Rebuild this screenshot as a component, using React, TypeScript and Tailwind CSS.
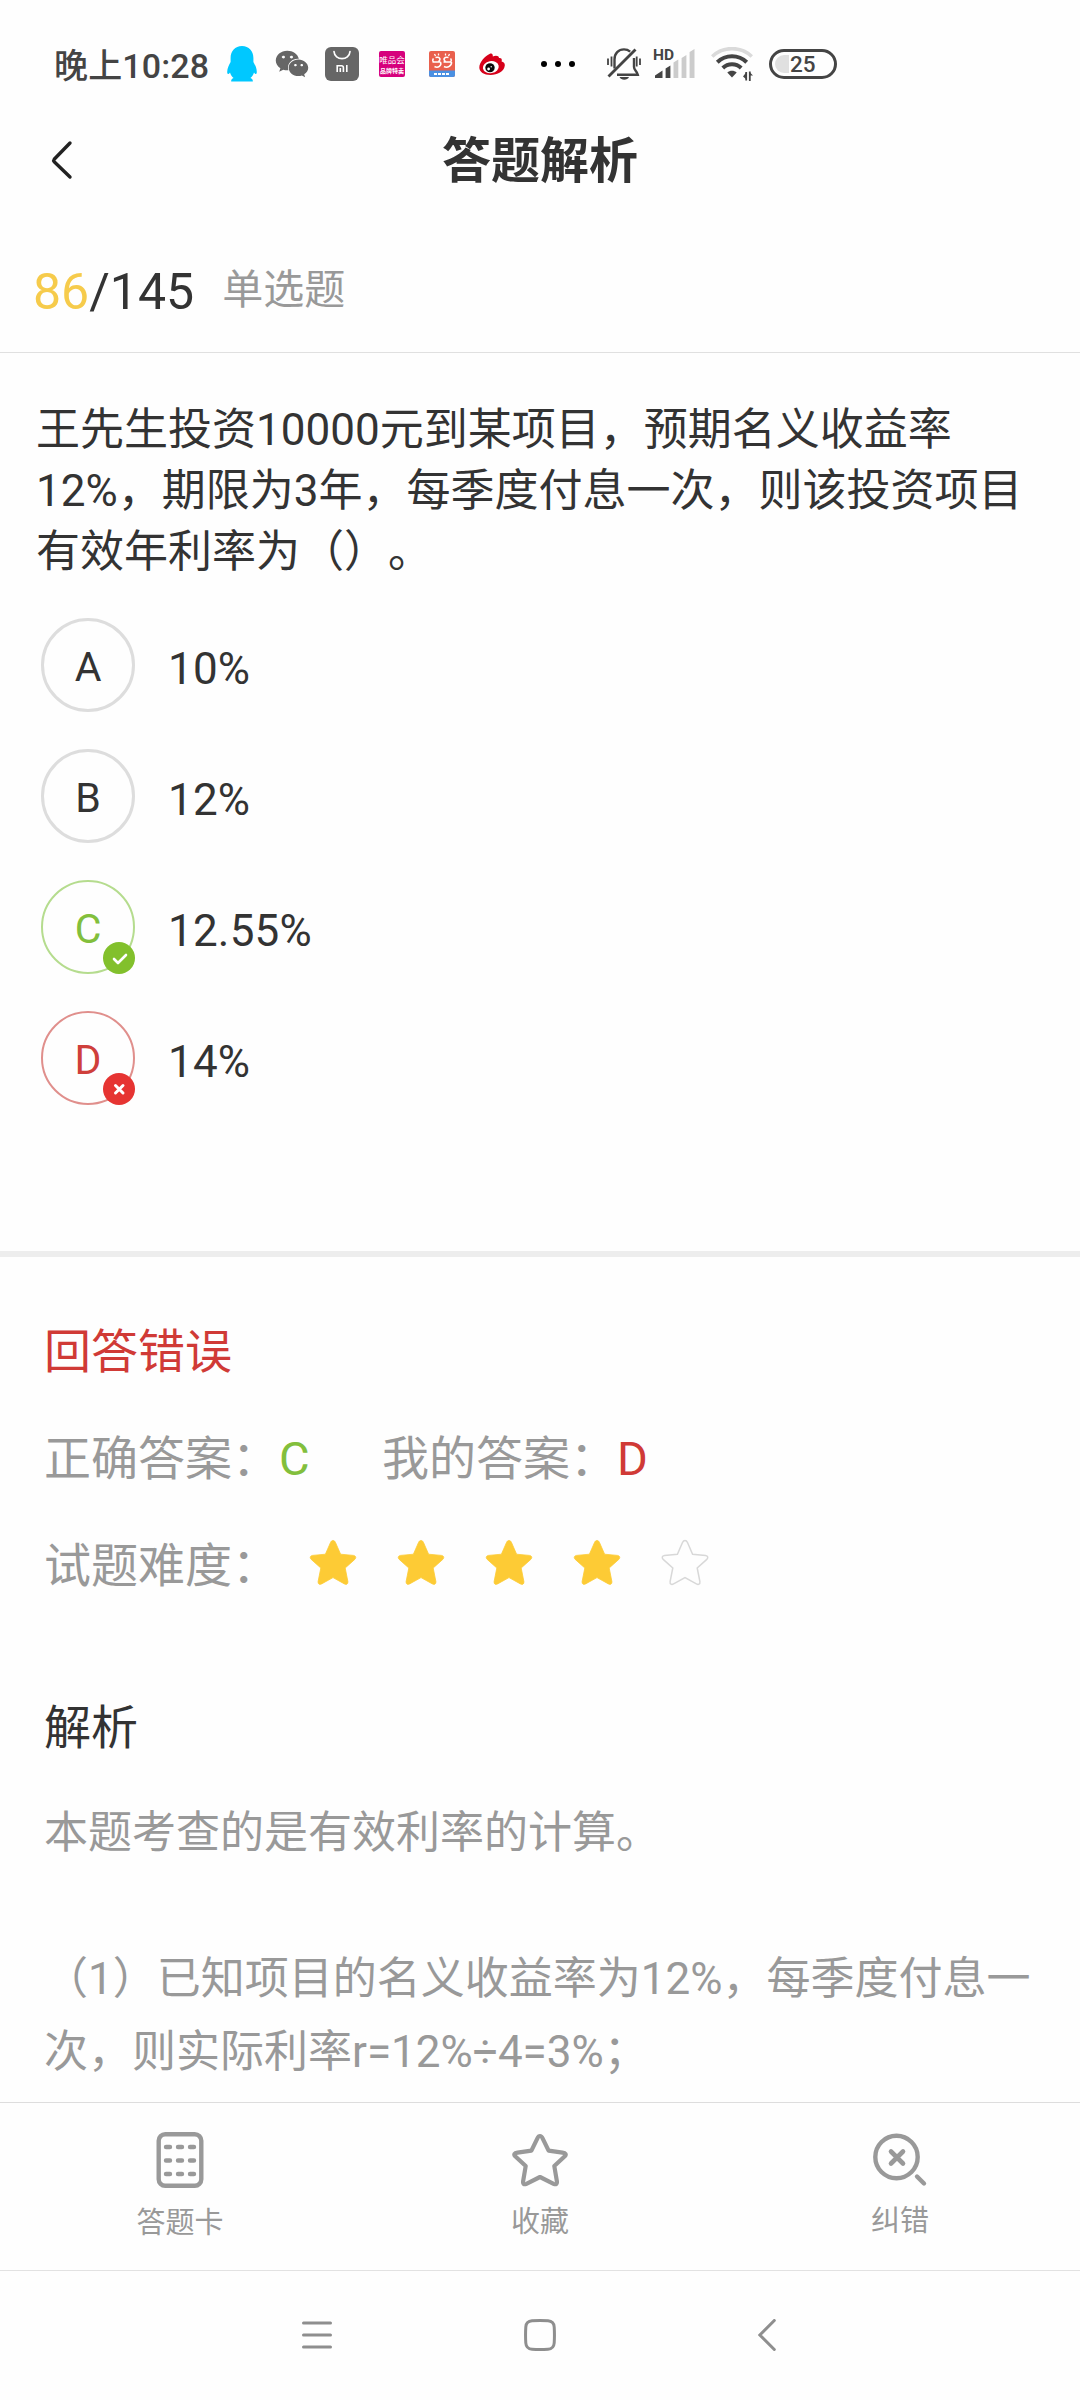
import React from 'react';
import { FaWeixin } from 'react-icons/fa';

type OptionState = 'normal' | 'correct' | 'wrong';

const OPTIONS: { key: string; text: string; state: OptionState }[] = [
  { key: 'A', text: '10%', state: 'normal' },
  { key: 'B', text: '12%', state: 'normal' },
  { key: 'C', text: '12.55%', state: 'correct' },
  { key: 'D', text: '14%', state: 'wrong' },
];

const CIRCLE_STYLES: Record<OptionState, string> = {
  normal: 'border-[3px] border-[#dddddd] text-[#333333]',
  correct: 'border-2 border-[#b5dc8e] text-[#82bf3c]',
  wrong: 'border-2 border-[#e08f8c] text-[#cf3f3b]',
};

const STAR_PATH =
  'M24 2.5 C25.3 2.5 26 3.4 26.5 4.5 L31.6 16.2 L44.5 17.4 C47 17.8 47.4 19.8 45.8 21.4 L36.2 30 L38.9 43.6 C39.2 46.2 37.4 47 35.4 45.9 L24 39.6 L12.6 45.9 C10.6 47 8.8 46.2 9.1 43.6 L11.8 30 L2.2 21.4 C0.6 19.8 1 17.8 3.5 17.4 L16.4 16.2 L21.5 4.5 C22 3.4 22.7 2.5 24 2.5 Z';

const StatusBar: React.FC = () => (
  <div className="flex h-32 shrink-0 items-center pl-[54px]">
    <span className="w-[173px] whitespace-nowrap pt-[3px] text-[34px] font-medium leading-none tracking-[0.15px] text-[#444444]">晚上10:28</span>
    {/* QQ */}
    <svg className="h-9 w-[30px]" viewBox="0 0 30 36" fill="#00c8ff">
      <path d="M15 0C8 0 3.6 5 3.6 12V16C2 19 .2 22 .2 26C.2 28.5 1.4 28.6 3 26.4C3.7 28.8 5 30.6 6.6 32C4.8 32.7 4 33.6 4.2 35.5H25.8C26 33.6 25.2 32.7 23.4 32C25 30.6 26.3 28.8 27 26.4C28.6 28.6 29.8 28.5 29.8 26C29.8 22 28 19 26.4 16V12C26.4 5 22 0 15 0Z" />
    </svg>
    <FaWeixin className="ml-[18px] h-[34px] w-[34px] text-[#666666]" />
    {/* Mi store */}
    <svg className="ml-4 h-[34px] w-[34px]" viewBox="0 0 34 34" fill="none">
      <rect width="34" height="34" rx="6" fill="#666666" />
      <path d="M9 4.5C9.6 14 24.4 14 25 4.5" stroke="#fff" strokeWidth="1.7" strokeLinecap="round" />
      <path d="M12.2 25V18.8H16.500Q18.400 18.800 18.400 20.700V25M15.300 21V25M21.800 18V25" stroke="#fff" strokeWidth="1.600" />
    </svg>
    {/* VIP shop */}
    <div className="ml-5 flex h-[26px] w-[26px] flex-col items-center justify-center rounded-[2px] bg-[#d6007c] text-white">
      <span className="whitespace-nowrap text-[8.5px] leading-[12px]">唯品会</span>
      <span className="whitespace-nowrap text-[6px] font-bold leading-[9px]">品牌特卖</span>
    </div>
    {/* Dangdang */}
    <svg className="ml-6 h-[26px] w-[26px]" viewBox="0 0 26 26" fill="none">
      <rect width="26" height="26" rx="2" fill="#e9604d" />
      <path d="M0 19.5H26V24Q26 26 24 26H2Q0 26 0 24Z" fill="#4a90e2" />
      <path d="M6.500 6.500C10.500 5.500 12.500 8 9.500 10.500M3.500 11H11.500M11.500 11C13 14.500 9 17.500 5.500 15.500M19.500 6.500C15.500 5.500 13.500 8 16.500 10.500M14.500 11H22.500M22.500 11C23 14.500 18.500 17.500 15 15.500M4.500 7.500C3.500 8.500 3.500 10 4.500 11M21.500 7.500C22.500 8.500 22.500 10 21.500 11" stroke="#fff" strokeWidth="1.500" />
      <path d="M5.500 3L6.500 5M9.500 2.500V4.500M16.500 2.500V4.500M20.500 3L19.500 5" stroke="#fff" strokeWidth="1.300" />
      <path d="M5 23H21" stroke="#fff" strokeWidth="2" strokeDasharray="3 1" />
    </svg>
    {/* Weibo */}
    <svg className="ml-6 h-[22px] w-[26px]" viewBox="0 0 26 22">
      <path d="M.3 14.5C.3 9 6 3.2 10.5 1C13 -.2 14 1 13.8 3.5C16.5 2 20 2.5 20 5C22.5 4.6 23.2 6.2 22.6 8.4C25 9 26.2 10.5 25.7 13C25 18.5 18.5 22 11.5 22C5 22 .3 19 .3 14.5Z" fill="#d6001a" />
      <ellipse cx="11.8" cy="14.2" rx="8" ry="6" fill="#fff" transform="rotate(-10 11.8 14.2)" />
      <ellipse cx="11" cy="14.8" rx="4.7" ry="4.5" fill="#0a0a0a" />
      <circle cx="9.6" cy="16" r="1.4" fill="#fff" />
      <circle cx="12.2" cy="13.7" r=".7" fill="#fff" />
    </svg>
    <div className="ml-9 flex gap-2">
      <span className="h-1.5 w-1.5 rounded-full bg-black" />
      <span className="h-1.5 w-1.5 rounded-full bg-black" />
      <span className="h-1.5 w-1.5 rounded-full bg-black" />
    </div>
    {/* Muted bell */}
    <svg className="ml-8 h-8 w-[34px]" viewBox="0 0 34 32" fill="none" stroke="#444444" strokeWidth="2.4">
      <path d="M7.500 20.500V11.500C7.500 5.500 11.500 1.400 17 1.400C19.500 1.400 21.500 2.200 23.200 3.600M27 10V19C27 22 30 23.500 30.800 26.700H10" />
      <path d="M1.500 28.500L28.500 1.500" strokeWidth="2.800" />
      <path d="M1 10.500V17M4.500 8.500V18.500M29.700 8.500V18.500M33 10.500V17" strokeWidth="1.800" />
      <path d="M12.500 29H22C20.500 32.500 14 32.500 12.500 29Z" fill="#444444" stroke="none" />
    </svg>
    {/* Mobile signal */}
    <svg className="ml-[11px] h-[38px] w-[43px] overflow-visible" viewBox="0 -3 43 38">
      <text x="1" y="11.500" fontFamily="Roboto" fontSize="15.500" fontWeight="700" fill="#444444">HD</text>
      <path d="M3 30V27.500L10.500 22.500V30Z" fill="#444444" />
      <path d="M13.600 30V20.500L18.400 17.500V30Z" fill="#444444" />
      <path d="M21.500 30V14.500L26.300 11.500V30ZM29.600 30V10L34.400 7V30ZM37.600 30V4L42.500 1V30Z" fill="#cccccc" />
    </svg>
    {/* Wi-Fi */}
    <svg className="ml-4 h-[34px] w-[42px]" viewBox="0 0 42 34" fill="none">
      <path d="M1.200 9.500C12 -1 30 -1 40.800 9.500" stroke="#dadada" strokeWidth="3.600" />
      <path d="M6.300 15.300C14.500 7.300 27.500 7.300 35.700 15.300" stroke="#444444" strokeWidth="4" />
      <path d="M11.800 21C17 16 25 16 30.200 21" stroke="#444444" strokeWidth="4" />
      <path d="M16.300 25.500C18.800 23.200 23.200 23.200 25.700 25.500L21 30.500Z" fill="#444444" />
      <path d="M35.200 25V33.500M38.800 24.500V34" stroke="#444444" strokeWidth="1.800" />
      <path d="M35.500 25V32.500L32 29.500ZM38.500 25L42 28.500H38.500Z" fill="#444444" />
    </svg>
    <div className="ml-4 flex h-[30px] w-[68px] items-center rounded-full border-[3px] border-[#444444] pl-[3px]">
      <span className="h-[18px] w-[14px] rounded-l-full bg-[#e0e0e0]" />
      <span className="ml-px pt-px text-[22.5px] font-medium leading-none text-[#444444]">25</span>
    </div>
  </div>
);

const DifficultyStar: React.FC<{ filled: boolean }> = ({ filled }) => (
  <svg className="h-12 w-12" viewBox="0 0 48 48">
    {filled ? (
      <path d={STAR_PATH} fill="#fdcb35" stroke="#fdcb35" strokeWidth="0.8" />
    ) : (
      <path d={STAR_PATH} fill="none" stroke="#d8d8d8" strokeWidth="1.5" />
    )}
  </svg>
);

const OptionRow: React.FC<{ label: string; text: string; state: OptionState }> = ({ label, text, state }) => (
  <div className="flex items-center">
    <div className={`relative flex h-[94px] w-[94px] items-center justify-center rounded-full text-[41px] ${CIRCLE_STYLES[state]}`}>
      <span className="pt-[5px] leading-none">{label}</span>
      {state !== 'normal' && (
        <svg className="absolute -bottom-0.5 -right-0.5 h-8 w-8" viewBox="0 0 32 32" fill="none" stroke="#fff" strokeLinecap="round" strokeLinejoin="round">
          <circle cx="16" cy="16" r="16" stroke="none" fill={state === 'correct' ? '#82c02c' : '#e63432'} />
          {state === 'correct' ? (
            <path d="M11 17L15 21L23 13" strokeWidth="2.600" />
          ) : (
            <path d="M12.500 12.500L20 20M20 12.500L12.500 20" strokeWidth="3" />
          )}
        </svg>
      )}
    </div>
    <span className="ml-[33px] pt-[7px] text-[44px] leading-none tracking-[0.2px]">{text}</span>
  </div>
);

const BottomTabs: React.FC = () => (
  <div className="grid h-[168px] shrink-0 grid-cols-3 border-t border-[#dddddd] text-[29px] leading-none text-[#999999]">
    <div className="flex flex-col items-center pt-[29px]">
      <svg className="h-[56px] w-[56px]" viewBox="0 0 56 56" fill="none" stroke="#999999">
        <rect x="6.700" y="2.200" width="42.600" height="51.600" rx="6.500" strokeWidth="4.400" />
        <path d="M14 15H18M26 15H30M38 15H42M14 28.500H18M26 28.500H30M38 28.500H42M14 42H18M26 42H30M38 42H42" strokeWidth="4.400" strokeLinecap="round" />
      </svg>
      <span className="mt-[21px]">答题卡</span>
    </div>
    <div className="flex flex-col items-center pt-[29px]">
      <svg className="h-[56px] w-[56px]" viewBox="0 0 56 56" fill="none" stroke="#999999" strokeWidth="4.200" strokeLinejoin="round">
        <path d="M28 4C29.200 4 30 5 30.600 6.300L36.600 18.700L50.500 20.600C53.600 21.100 54.600 22.400 52.800 24.300L42.300 34L44.900 49.400C45.200 52 44 52.900 41.600 51.800L28 45L14.400 51.800C12 52.900 10.800 52 11.100 49.400L13.700 34L3.200 24.300C1.400 22.400 2.400 21.100 5.500 20.600L19.400 18.700L25.400 6.300C26 5 26.800 4 28 4Z" />
      </svg>
      <span className="mt-[20px]">收藏</span>
    </div>
    <div className="flex flex-col items-center pt-[29px]">
      <svg className="h-[56px] w-[56px]" viewBox="0 0 56 56" fill="none" stroke="#999999" strokeLinecap="round">
        <circle cx="24.500" cy="25" r="21.200" strokeWidth="4.400" />
        <path d="M19 19.500L31 31.500M31 19.500L19 31.500" strokeWidth="4.600" />
        <path d="M45 44.500L52 51.500" strokeWidth="4.400" />
      </svg>
      <span className="mt-[19px]">纠错</span>
    </div>
  </div>
);

const SystemNav: React.FC = () => (
  <div className="flex h-[130px] shrink-0 items-center border-t border-[#e2e2e2] pb-px pl-[302px]">
    <svg className="h-8 w-[30px]" viewBox="0 0 30 32" stroke="#8e8e8e" strokeWidth="3" strokeLinecap="round">
      <path d="M1.500 4H28.500M1.500 16H28.500M1.500 28H28.500" />
    </svg>
    <svg className="ml-48 h-8 w-8" viewBox="0 0 32 32" fill="none" stroke="#8e8e8e" strokeWidth="3">
      <path d="M8 1.800Q16 1.300 24 1.800Q29.800 2.200 30.200 8Q30.700 16 30.200 24Q29.800 29.800 24 30.200Q16 30.700 8 30.200Q2.200 29.800 1.800 24Q1.300 16 1.800 8Q2.200 2.200 8 1.800Z" />
    </svg>
    <svg className="ml-[202px] h-8 w-[18px]" viewBox="0 0 18 32" fill="none" stroke="#8e8e8e" strokeWidth="3" strokeLinecap="round">
      <path d="M16.300 1.500L1.800 16L16.300 30.500" />
    </svg>
  </div>
);

const App: React.FC = () => {
  return (
    <div className="flex h-[2400px] w-[1080px] flex-col overflow-hidden bg-[#fefefe] font-[Roboto,'Noto_Sans_CJK_SC',sans-serif] text-[#333333] [text-spacing-trim:space-all]">
      <StatusBar />

      {/* Title */}
      <header className="grid h-16 shrink-0 grid-cols-3 items-center">
        <svg className="ml-[51px] h-10 w-[22px]" viewBox="0 0 22 40" fill="none" stroke="#222222" strokeWidth="3.4" strokeLinecap="round" strokeLinejoin="round">
          <path d="M19 3L3.200 19.200Q2.200 20.500 3.200 21.800L19 37" />
        </svg>
        <h1 className="pt-[3px] text-center text-[49px] font-bold leading-none">答题解析</h1>
      </header>

      <div className="flex h-[161px] shrink-0 items-center border-b border-[#e0e0e0] pl-[33px] pt-[36px]">
        <span className="pt-[3px] text-[50px] leading-none text-[#333333]">
          <span className="text-[#f6cb4b]">86</span>/145
        </span>
        <span className="ml-[28px] text-[41px] leading-none text-[#999999]">单选题</span>
      </div>

      <main className="flex-1 overflow-hidden">
        {/* Question */}
        <section className="border-b-[6px] border-[#ededed] pb-[146px] pt-[47px]">
          <p className="pl-[36px] text-[44px] leading-[61px]">
            王先生投资10000元到某项目，预期名义收益率
            <br />
            12%，期限为3年，每季度付息一次，则该投资项目
            <br />
            有效年利率为（）。
          </p>
          <div className="mt-[35px] flex flex-col gap-[37px] pl-[41px]">
            {OPTIONS.map((option) => (
              <OptionRow key={option.key} label={option.key} text={option.text} state={option.state} />
            ))}
          </div>
        </section>

        {/* Result */}
        <section className="pl-[44px] pt-[42px] text-[47px] text-[#999999]">
          <div className="flex h-[107px] items-center text-[#d03a36]">回答错误</div>
          <div className="flex h-[107px] items-center">
            <span className="w-[338px]">
              正确答案：<span className="text-[#82bf3c]">C</span>
            </span>
            <span>
              我的答案：<span className="text-[#d03a36]">D</span>
            </span>
          </div>
          <div className="flex h-[107px] items-center">
            <span className="w-[265px]">试题难度：</span>
            <div className="flex gap-10 pb-[9px]">
              {[1, 2, 3, 4, 5].map((n) => (
                <DifficultyStar key={n} filled={n <= 4} />
              ))}
            </div>
          </div>

          <h2 className="mt-[71px] leading-[73px] text-[#333333]">解析</h2>
          <div className="mt-[33px] text-[44px] leading-[73px]">
            <p>本题考查的是有效利率的计算。</p>
            <p className="mt-[73px]">
              （1）已知项目的名义收益率为12%，每季度付息一
              <br />
              次，则实际利率r=12%÷4=3%；
            </p>
          </div>
        </section>
      </main>

      <BottomTabs />
      <SystemNav />
    </div>
  );
};

export default App;
